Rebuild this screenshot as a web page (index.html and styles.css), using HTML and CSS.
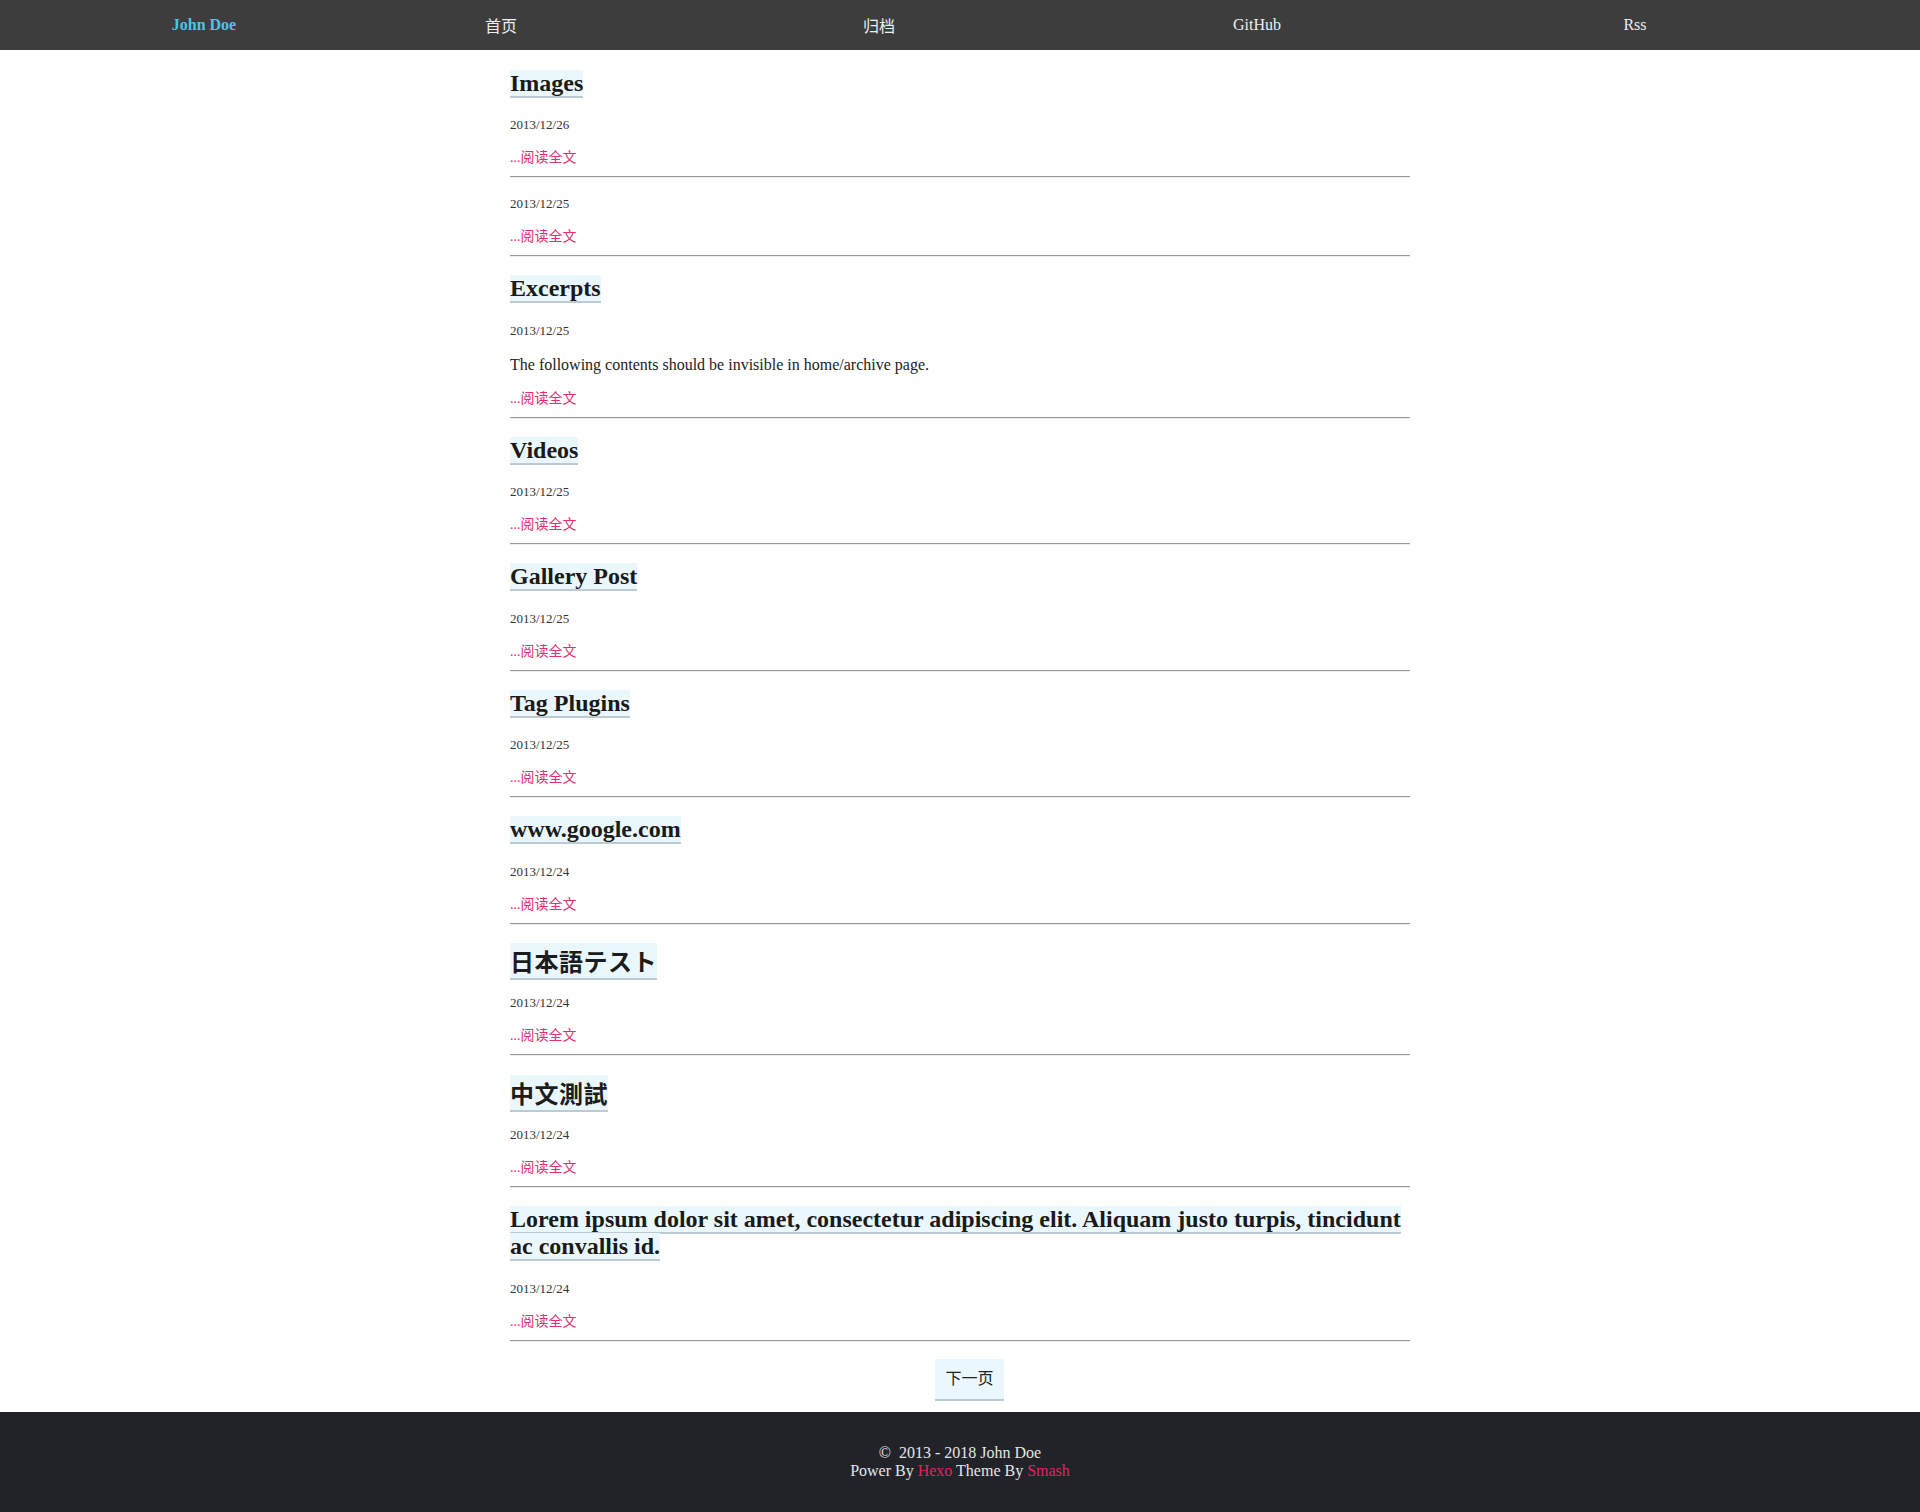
FILE: index.html
```html
<!DOCTYPE html>
<html lang="zh-CN">
<head>
<meta charset="utf-8">
<title>John Doe</title>
<link rel="stylesheet" href="styles.css">
</head>
<body>
<header class="site-header">
  <nav class="nav">
    <a class="nav-brand" href="#">John Doe</a>
    <a class="nav-link" href="#">首页</a>
    <a class="nav-link" href="#">归档</a>
    <a class="nav-link" href="#">GitHub</a>
    <a class="nav-link" href="#">Rss</a>
  </nav>
</header>

<main class="content">
  <article class="post">
    <h2 class="post-title"><a href="#">Images</a></h2>
    <p class="post-date">2013/12/26</p>
    <a class="read-more" href="#">...阅读全文</a>
    <hr class="divider">
  </article>

  <article class="post">
    <p class="post-date">2013/12/25</p>
    <a class="read-more" href="#">...阅读全文</a>
    <hr class="divider">
  </article>

  <article class="post">
    <h2 class="post-title"><a href="#">Excerpts</a></h2>
    <p class="post-date">2013/12/25</p>
    <p class="post-excerpt">The following contents should be invisible in home/archive page.</p>
    <a class="read-more" href="#">...阅读全文</a>
    <hr class="divider">
  </article>

  <article class="post">
    <h2 class="post-title"><a href="#">Videos</a></h2>
    <p class="post-date">2013/12/25</p>
    <a class="read-more" href="#">...阅读全文</a>
    <hr class="divider">
  </article>

  <article class="post">
    <h2 class="post-title"><a href="#">Gallery Post</a></h2>
    <p class="post-date">2013/12/25</p>
    <a class="read-more" href="#">...阅读全文</a>
    <hr class="divider">
  </article>

  <article class="post">
    <h2 class="post-title"><a href="#">Tag Plugins</a></h2>
    <p class="post-date">2013/12/25</p>
    <a class="read-more" href="#">...阅读全文</a>
    <hr class="divider">
  </article>

  <article class="post">
    <h2 class="post-title"><a href="#">www.google.com</a></h2>
    <p class="post-date">2013/12/24</p>
    <a class="read-more" href="#">...阅读全文</a>
    <hr class="divider">
  </article>

  <article class="post">
    <h2 class="post-title post-title-cjk" lang="ja"><a href="#">日本語テスト</a></h2>
    <p class="post-date">2013/12/24</p>
    <a class="read-more" href="#">...阅读全文</a>
    <hr class="divider">
  </article>

  <article class="post">
    <h2 class="post-title post-title-cjk" lang="zh-TW"><a href="#">中文測試</a></h2>
    <p class="post-date">2013/12/24</p>
    <a class="read-more" href="#">...阅读全文</a>
    <hr class="divider">
  </article>

  <article class="post">
    <h2 class="post-title"><a href="#">Lorem ipsum dolor sit amet, consectetur adipiscing elit. Aliquam justo turpis, tincidunt ac convallis id.</a></h2>
    <p class="post-date">2013/12/24</p>
    <a class="read-more" href="#">...阅读全文</a>
    <hr class="divider">
  </article>

  <div class="pager">
    <a class="pager-next" href="#">下一页</a>
  </div>
</main>

<footer class="site-footer">
  <p class="footer-line">&copy;&nbsp; 2013 - 2018 John Doe</p>
  <p class="footer-line">Power By <a href="#">Hexo</a> Theme By <a href="#">Smash</a></p>
</footer>
</body>
</html>
```

FILE: styles.css
```css
* {
  box-sizing: border-box;
}

html, body {
  margin: 0;
  padding: 0;
}

body {
  font-family: "Liberation Serif", "Noto Sans CJK SC", serif;
  font-size: 16px;
  color: #222;
  background: #fff;
}

a {
  text-decoration: none;
}

/* ---------- top navigation ---------- */
.site-header {
  height: 50px;
  background: #3d3d3d;
}

.nav {
  width: 1728px;
  height: 49px;
  margin: 0 auto;
  display: grid;
  grid-template-columns: 216px repeat(4, 1fr);
  align-items: center;
  text-align: center;
  font-size: 16px;
}

.nav-brand {
  color: #4dc3e8;
  font-weight: bold;
}

.nav-link {
  color: #eee;
}

/* ---------- post list ---------- */
.content {
  width: 900px;
  margin: 0 auto;
  padding-top: 1.5px;
}

.post {
  padding-top: 18px;
}

.post-title {
  margin: 0 0 20px;
  font-size: 24px;
  line-height: 27.5px;
  font-weight: bold;
}

.post-title a {
  color: #1a1a1a;
  background: #eaf8fd;
  border-bottom: 2px solid #bccbd3;
}

.post-title-cjk {
  padding-top: 4.5px;
  margin-bottom: 20.5px;
  font-family: "Noto Sans CJK JP", "Noto Sans CJK SC", sans-serif;
  letter-spacing: 0.5px;
}

.post-title-cjk a {
  color: #1c1c1c;
}

.post-date {
  margin: 0 0 18px;
  font-size: 13px;
  line-height: 15px;
  color: #333;
}

.post-excerpt {
  margin: 0 0 17px;
  font-size: 16px;
  line-height: 18px;
  color: #222;
}

.read-more {
  display: block;
  margin-bottom: 10px;
  font-family: "Liberation Serif", "Noto Sans CJK SC", sans-serif;
  font-size: 14px;
  line-height: 16px;
  color: #e0306f;
}

.divider {
  margin: 0;
  height: 0;
  border: 0;
  border-top: 1px solid #999;
  border-bottom: 1px solid #eee;
}

/* ---------- pagination ---------- */
.pager {
  display: flex;
  justify-content: center;
  padding: 17.5px 0 10.5px 19px;
}

.pager-next {
  display: block;
  padding: 9px 10px 9px;
  height: 42px;
  line-height: 22px;
  font-size: 16px;
  color: #222;
  background: #eaf8fd;
  border-bottom: 2px solid #bccbd3;
}

/* ---------- footer ---------- */
.site-footer {
  height: 100px;
  padding-top: 32px;
  background: #212329;
  color: #e6e6e6;
  text-align: center;
  font-size: 16px;
}

.footer-line {
  margin: 0;
  line-height: 18px;
}

.site-footer a {
  color: #e0245e;
}
```
